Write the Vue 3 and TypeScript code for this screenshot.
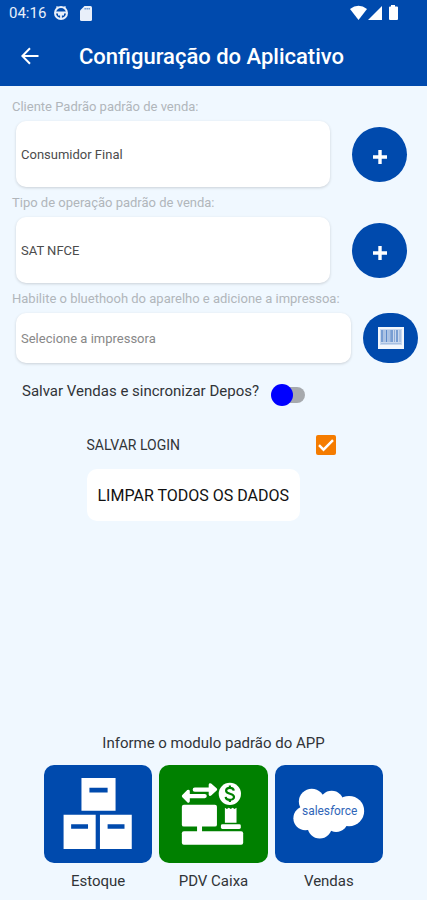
<script setup lang="ts">
import { ref } from 'vue'

type ModuleId = 'estoque' | 'pdv' | 'vendas'

const modules: { id: ModuleId; label: string }[] = [
  { id: 'estoque', label: 'Estoque' },
  { id: 'pdv', label: 'PDV Caixa' },
  { id: 'vendas', label: 'Vendas' },
]

const cliente = ref('Consumidor Final')
const operacao = ref('SAT NFCE')
const impressora = ref('')
const sincronizarDepois = ref(false)
const salvarLogin = ref(true)
const selected = ref<ModuleId>('pdv')
</script>

<template>
  <div class="app">
    <header class="top">
      <div class="status">
        <span class="clock">04:16</span>
        <svg class="ic-round" viewBox="0 0 16 16" aria-hidden="true">
          <circle cx="8" cy="8" r="6" fill="none" stroke="currentColor" stroke-width="2" />
          <path d="M2.500 7.500H13.500M5 9.500H11M8 9.500V14" fill="none" stroke="currentColor" stroke-width="1.800" />
          <path d="M3.500 1.500L5 3M12.500 1.500L11 3" stroke="currentColor" stroke-width="1.600" />
        </svg>
        <svg class="ic-card" viewBox="0 0 12 15" aria-hidden="true">
          <path d="M4.500 0H10.500Q12 0 12 1.500V13.500Q12 15 10.500 15H1.500Q0 15 0 13.500V4.500Z" fill="currentColor" />
          <path d="M4.500 2.800H10" stroke="#004aad" stroke-opacity="0.600" stroke-width="1.600" stroke-dasharray="1.300 0.700" />
        </svg>
        <svg class="ic-signal" viewBox="0 0 48 16" aria-hidden="true">
          <path d="M0 4Q8.500 -2.500 17 4L8.500 15Z" fill="currentColor" />
          <path d="M32 1V15H18Z" fill="currentColor" />
          <path d="M41 0H45V1.500H47Q48 1.500 48 2.500V14Q48 15 47 15H40Q39 15 39 14V2.500Q39 1.500 40 1.500H41Z" fill="currentColor" />
        </svg>
      </div>
      <div class="bar">
        <button class="back" type="button" aria-label="Voltar">
          <svg viewBox="0 0 18 18" aria-hidden="true">
            <path d="M17.500 9H1.500M9 1.200L1.300 9L9 16.800" fill="none" stroke="currentColor" stroke-width="2" />
          </svg>
        </button>
        <h1>Configuração do Aplicativo</h1>
      </div>
    </header>

    <main>
      <section class="field">
        <label for="cliente">Cliente Padrão padrão de venda:</label>
        <div class="row">
          <input id="cliente" v-model="cliente" class="card" type="text" />
          <button class="round" type="button" aria-label="Adicionar cliente">
            <svg class="plus" viewBox="0 0 14 16" aria-hidden="true"><path d="M7 1V15M0 8H14" stroke="currentColor" stroke-width="3.400" /></svg>
          </button>
        </div>
      </section>

      <section class="field">
        <label for="operacao">Tipo de operação padrão de venda:</label>
        <div class="row">
          <input id="operacao" v-model="operacao" class="card" type="text" />
          <button class="round" type="button" aria-label="Adicionar operação">
            <svg class="plus" viewBox="0 0 14 16" aria-hidden="true"><path d="M7 1V15M0 8H14" stroke="currentColor" stroke-width="3.400" /></svg>
          </button>
        </div>
      </section>

      <section class="field">
        <label for="impressora">Habilite o bluethooh do aparelho e adicione a impressoa:</label>
        <div class="row printer">
          <input id="impressora" v-model="impressora" class="card" type="text" placeholder="Selecione a impressora" />
          <button class="round" type="button" aria-label="Buscar impressora">
            <svg class="barcode" viewBox="0 0 26 22" aria-hidden="true">
              <rect width="26" height="22" fill="#f2f6fc" />
              <rect x="2" y="2" width="22" height="16" fill="#c9d8ee" />
              <path d="M4 3V15M8.500 3V15M14 3V15M19 3V15" stroke="#5e8aca" stroke-width="1.500" />
              <path d="M6 3V15M11 3V15M12.500 3V15M16.500 3V15M22 3V15" stroke="#8dacd9" stroke-width="1" />
              <path d="M3 16.500H23" stroke="#a8c0e2" stroke-width="1" />
            </svg>
          </button>
        </div>
      </section>

      <label class="sync">
        <span>Salvar Vendas e sincronizar Depos?</span>
        <input v-model="sincronizarDepois" class="switch" type="checkbox" role="switch" />
      </label>

      <div class="account">
        <label class="login">
          <span>SALVAR LOGIN</span>
          <span class="tick">
            <input v-model="salvarLogin" type="checkbox" />
            <svg v-if="salvarLogin" viewBox="0 0 20 20" aria-hidden="true">
              <path d="M3 10.200L7.500 14.700L17 5.200" fill="none" stroke="#fff" stroke-width="2.400" />
            </svg>
          </span>
        </label>
        <button class="clear" type="button">LIMPAR TODOS OS DADOS</button>
      </div>

      <section class="modules">
        <h2>Informe o modulo padrão do APP</h2>
        <div class="tiles">
          <button
            v-for="m in modules"
            :key="m.id"
            class="module"
            type="button"
            :aria-pressed="selected === m.id"
            @click="selected = m.id"
          >
            <span class="tile" :class="{ active: selected === m.id }">
              <svg v-if="m.id === 'estoque'" viewBox="0 0 109 98" aria-hidden="true">
                <path d="M37.700 12.700H72V45.700H37.700ZM19.700 49.700H52V84.300H19.700ZM56.300 49.700H88.300V84.300H56.300Z" fill="#fff" />
                <path d="M45.700 25H64M27.300 61.500H44.300M64 61.500H81" stroke="#004aad" stroke-width="4.600" />
              </svg>
              <svg v-else-if="m.id === 'pdv'" viewBox="0 0 109 98" aria-hidden="true">
                <g fill="#fff">
                  <rect x="23" y="39.700" width="35.300" height="22" rx="2" />
                  <rect x="38.300" y="60" width="5" height="8" />
                  <rect x="23" y="66.300" width="61.700" height="13.700" rx="2" />
                  <path d="M66.300 42.700L68.300 44L70.200 42.700L72.200 44L74.100 42.700L76 44L78 42.700V57.700H66.300Z" />
                  <rect x="62.300" y="59.300" width="20" height="4.700" rx="1.500" />
                  <circle cx="71.300" cy="28.700" r="11.200" />
                </g>
                <path d="M36 24.500H55M46 31H26" fill="none" stroke="#fff" stroke-width="4.200" stroke-linecap="round" />
                <path d="M51.500 19.500L57 24.300L51.500 29.300ZM29.500 26L24.500 31L29.500 36Z" fill="#fff" stroke="#fff" stroke-width="3" stroke-linejoin="round" />
                <path d="M75.200 25.500C75 21.800 67.500 21.800 67.500 25.500C67.500 29.500 75.500 27.700 75.500 32C75.500 35.700 67.300 35.700 67.100 31.800M71.300 20.300V23M71.300 34.500V37" fill="none" stroke="#008000" stroke-width="2.200" />
              </svg>
              <svg v-else viewBox="0 0 109 98" aria-hidden="true">
                <g fill="#fff">
                  <circle cx="37" cy="36.500" r="13" />
                  <circle cx="57" cy="37.500" r="12" />
                  <circle cx="74.500" cy="46" r="15.200" />
                  <circle cx="30.500" cy="53.300" r="12" />
                  <circle cx="45" cy="61.500" r="12.200" />
                  <circle cx="61.500" cy="55" r="12" />
                  <rect x="32" y="36" width="40" height="22" />
                </g>
                <text class="brand" x="55" y="50" text-anchor="middle">sales<tspan font-style="italic">f</tspan>orce</text>
              </svg>
            </span>
            <span class="name">{{ m.label }}</span>
          </button>
        </div>
      </section>
    </main>
  </div>
</template>

<style>
body {
  margin: 0;
  background: #f0f8ff;
}
</style>

<style scoped>
.app {
  display: flex;
  flex-direction: column;
  min-height: 100vh;
  box-sizing: border-box;
  background: #f0f8ff;
  color: #303438;
  font-family: Roboto, 'Liberation Sans', sans-serif;
}
button,
input {
  margin: 0;
  border: 0;
  font-family: inherit;
}
button {
  padding: 0;
  cursor: pointer;
}
svg {
  display: block;
}
.top {
  background: #004aad;
  color: #fff;
}
.status {
  display: flex;
  align-items: center;
  height: 26px;
  padding: 0 29px 0 9px;
  color: #e8effa;
}
.clock {
  font-size: 15px;
  line-height: 26px;
}
.ic-round {
  width: 16px;
  height: 16px;
  margin-left: 7px;
}
.ic-card {
  width: 12px;
  height: 15px;
  margin-left: 11px;
}
.ic-signal {
  width: 48px;
  height: 16px;
  margin-left: auto;
  color: #fff;
}
.bar {
  display: flex;
  align-items: center;
  height: 60px;
  padding-left: 21px;
}
.back {
  background: none;
  color: #fff;
}
.back svg {
  width: 18px;
  height: 18px;
}
h1 {
  margin: 0 0 0 40px;
  padding-top: 2px;
  font-size: 22px;
  line-height: 28px;
  font-weight: 500;
}
main {
  display: flex;
  flex: 1;
  flex-direction: column;
  padding-top: 13px;
}
.field {
  margin-bottom: 8px;
}
.field label {
  display: block;
  margin-left: 12px;
  font-size: 13px;
  line-height: 16px;
  color: #b1b6bb;
}
.row {
  display: flex;
  align-items: center;
  gap: 22px;
  margin-top: 6px;
  padding: 0 20px 0 16px;
}
.card {
  flex: 1;
  min-width: 0;
  height: 66px;
  box-sizing: border-box;
  padding: 0 5px;
  border-radius: 10px;
  background: #fff;
  box-shadow: 0 1px 3px rgba(0, 0, 0, 0.16);
  color: #4c4c4c;
  font-size: 13px;
}
.card::placeholder {
  color: #888;
  opacity: 1;
}
.round {
  display: flex;
  align-items: center;
  justify-content: center;
  width: 55px;
  height: 55px;
  border-radius: 28px;
  background: #004aad;
  color: #fff;
}
.plus {
  width: 14px;
  height: 16px;
  margin-top: 6px;
}
.printer {
  gap: 12px;
  padding-right: 9px;
}
.printer .card,
.printer .round {
  height: 50px;
}
.barcode {
  width: 26px;
  height: 22px;
}
.sync {
  display: flex;
  align-items: flex-start;
  gap: 12px;
  margin: 10px 0 0 22px;
  font-size: 15px;
  line-height: 20px;
}
.switch {
  display: grid;
  align-items: center;
  width: 34px;
  height: 22px;
  margin-top: 3px;
  appearance: none;
  cursor: pointer;
}
.switch::before,
.switch::after {
  content: '';
  grid-area: 1 / 1;
}
.switch::before {
  height: 16px;
  margin-left: 6px;
  border-radius: 8px;
  background: #a6a9ad;
}
.switch::after {
  width: 22px;
  height: 22px;
  border-radius: 50%;
  background: #0000ff;
}
.switch:checked::after {
  margin-left: 12px;
}
.account {
  display: flex;
  flex-direction: column;
  align-items: flex-start;
  gap: 14px;
  width: 249px;
  margin: 29px auto 0;
  padding-right: 5px;
}
.login {
  display: flex;
  align-items: center;
  justify-content: space-between;
  width: 100%;
  font-size: 14px;
  line-height: 20px;
}
.tick {
  display: grid;
}
.tick input,
.tick svg {
  grid-area: 1 / 1;
  width: 20px;
  height: 20px;
}
.tick input {
  appearance: none;
  border-radius: 2px;
  background: #f57c00;
}
.tick input:not(:checked) {
  border: 2px solid #777;
  background: none;
}
.tick svg {
  pointer-events: none;
}
.clear {
  height: 52px;
  padding: 0 11px;
  border-radius: 10px;
  background: #fff;
  color: #111;
  font-size: 16px;
}
.modules {
  margin-top: auto;
  padding: 24px 0 9px;
}
h2 {
  margin: 0;
  font-size: 15px;
  line-height: 20px;
  font-weight: 400;
  text-align: center;
}
.tiles {
  display: grid;
  grid-template-columns: repeat(3, minmax(0, 1fr));
  gap: 7px;
  max-width: 339px;
  margin: 12px auto 0;
}
.module {
  background: none;
  color: inherit;
}
.tile {
  display: flex;
  align-items: center;
  justify-content: center;
  height: 98px;
  border-radius: 10px;
  background: #004aad;
}
.tile.active {
  background: #008000;
}
.tile svg {
  width: 100%;
  height: 98px;
}
.brand {
  font-size: 12px;
  fill: #2f65b8;
}
.name {
  display: block;
  margin-top: 8px;
  font-size: 15px;
  line-height: 20px;
}
</style>
